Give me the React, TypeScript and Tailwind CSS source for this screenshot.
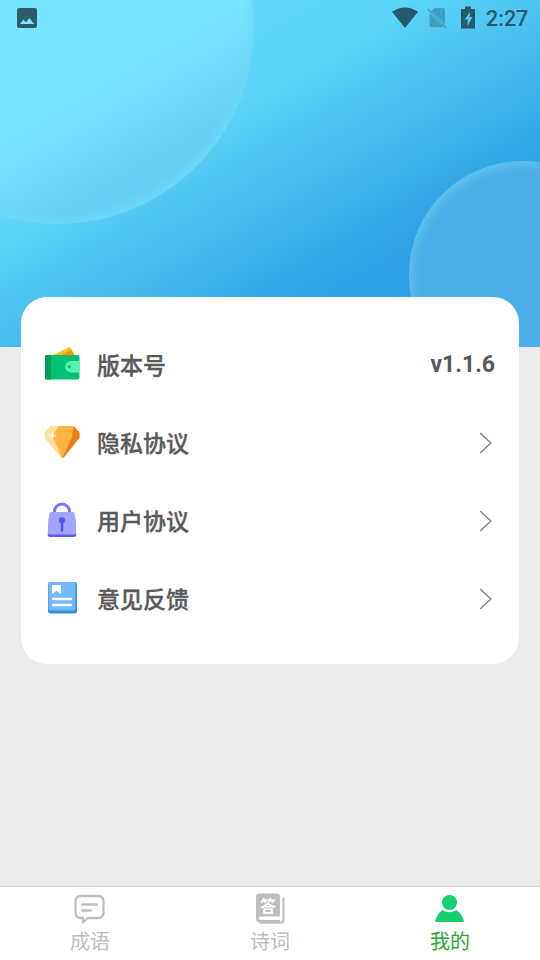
import React, { useState } from 'react';
import clsx from 'clsx';

const WalletIcon = () => (
  <svg width="36" height="36" viewBox="0 0 36 36">
    <path d="M7 10 25 1.200q1.200-.6 1.800.6L31 10z" fill="#ffc02c" />
    <path d="M15 10 27.200 3.400 31 10z" fill="#ff9500" />
    <rect x="1" y="9" width="34.500" height="24.500" rx="1.800" fill="#07c076" />
    <path d="M2.500 9H7v24.500H2.500A1.500 1.500 0 0 1 1 32V10.500A1.500 1.500 0 0 1 2.500 9z" fill="#03a055" />
    <path d="M27 15h8.500v11.500H27a5.750 5.750 0 0 1 0-11.500z" fill="#4ff5b1" />
    <circle cx="25.300" cy="20.700" r="1.500" fill="#07b26c" />
  </svg>
);

const DiamondIcon = () => (
  <svg width="36" height="36" viewBox="0 0 36 36">
    <path d="M8 2h20q1.500 0 2.500 1l4.300 4.500q.7.800.7 2v3q0 1-.7 2L20 33q-1.500 2-3.200 0L1.700 14.500q-.7-1-.7-2v-3q0-1.200.7-2L5.700 3Q6.600 2 8 2z" fill="#ffb341" />
    <path d="M8 2h6.500L8.500 12.500 18 34q-.7 0-1.300-.8L1.700 14.500q-.7-1-.7-2v-3q0-1.200.7-2L5.700 3Q6.600 2 8 2z" fill="#ffe09a" />
    <path d="m29.500 2.300 1 .7 4.300 4.500q.7.800.7 2v3q0 1-.7 2L20 33q-.8 1-1.700 1L28 13.500z" fill="#ea7a1c" />
    <path d="m8.500 7.800 1.100 2.900 2.900 1.100-2.900 1.100-1.100 2.900-1.100-2.900-2.900-1.100 2.900-1.100z" fill="#fff" />
  </svg>
);

const LockIcon = () => (
  <svg width="36" height="36" viewBox="0 0 36 36">
    <path d="M10.500 12v-2.500a7.500 7.500 0 0 1 15 0V12" fill="none" stroke="#7276fb" strokeWidth="3" />
    <path d="M5 14h26l1.200 18.500q0 2.500-2.500 2.500H6.300q-2.500 0-2.500-2.500z" fill="#5a5ef0" />
    <path d="M7 10h22q1.500 0 1.700 1.500l1.500 19q0 2-2.500 2H6.300q-2.500 0-2.500-2l1.500-19Q5.500 10 7 10z" fill="#a1a5ff" />
    <circle cx="18" cy="18.300" r="3" fill="#5155e6" />
    <path d="M18 19v9.500" stroke="#5155e6" strokeWidth="2.600" strokeLinecap="round" />
  </svg>
);

const BookIcon = () => (
  <svg width="36" height="36" viewBox="0 0 36 36">
    <rect x="4" y="2" width="29" height="31.500" rx="2.500" fill="#378bdc" />
    <rect x="4.500" y="2" width="27" height="28.500" rx="1.500" fill="#73b9fe" />
    <path d="M8 5h9v9l-4.500-3.300L8 14z" fill="#fff" />
    <path d="M9.200 19h17.600M9.200 25h17.600" stroke="#fff" strokeWidth="2.600" strokeLinecap="round" />
  </svg>
);

const Chevron = () => (
  <svg width="14" height="22" viewBox="0 0 14 22" fill="none" stroke="#868686" strokeWidth="1.500">
    <path d="M1.200 1 11.800 11 1.200 21" />
  </svg>
);

const StatusBar = () => (
  <div className="relative flex h-9 items-center pl-[17px] pr-[12px] text-[#26596a]">
    <svg width="20" height="20" viewBox="0 0 20 20">
      <path
        fillRule="evenodd"
        d="M2 0h16a2 2 0 0 1 2 2v16a2 2 0 0 1-2 2H2a2 2 0 0 1-2-2V2A2 2 0 0 1 2 0zM3 16h14l-4.500-6-3.500 4.400L6.500 11.500z"
        fill="#305c69"
      />
    </svg>
    <svg className="ml-auto" width="26" height="22" viewBox="0 0 26 22">
      <path d="M0 4.800Q13-4 26 4.800L13 21z" fill="currentColor" />
    </svg>
    <svg className="ml-[9px]" width="20" height="22" viewBox="0 0 20 22">
      <path d="M7.500 1H16a2 2 0 0 1 2 2v14.600L4.500 4zM2.500 6.200 17 20.300H4.500a2 2 0 0 1-2-2z" fill="#429ebd" />
      <path d="m1 2 18 18.800" stroke="#429ebd" strokeWidth="1.500" />
    </svg>
    <svg className="ml-[14px] -mt-[2px]" width="14" height="23" viewBox="0 0 14 23">
      <path
        fillRule="evenodd"
        d="M4 .5h6V3h3.200q.8 0 .8.800v18q0 .8-.8.800H.8q-.8 0-.8-.8v-18Q0 3 .8 3H4zM9 6 3.500 13.500H6.500V20l5-9H8.500z"
        fill="currentColor"
      />
    </svg>
    <span className="ml-[11px] mt-0.5 w-[42px] whitespace-nowrap font-[Roboto,sans-serif] text-[21.5px] font-medium leading-none">
      2:27
    </span>
  </div>
);

const Header = () => (
  <header className="relative h-[347px] overflow-hidden bg-[linear-gradient(150deg,#66dcfc_0px,#62d9fa_130px,#5bd5f8_205px,#48bdef_300px,#36aae8_380px,#2da1e4_418px,#2da1e4_600px)]">
    <div className="absolute -left-[140px] -top-[170px] size-[394px] rounded-full bg-[linear-gradient(150deg,#78e6ff_0px,#78e6ff_335px,#67cff6_445px,#69d2f8_540px)] shadow-[inset_-3px_-5px_9px_#6fd8fa]" />
    <div className="absolute left-[409px] top-[161px] size-[227px] rounded-full bg-[#4cafe7] shadow-[inset_3px_4px_9px_#60c2ed]" />
    <StatusBar />
  </header>
);

const menuItems = [
  { label: '版本号', icon: WalletIcon, value: 'v1.1.6' },
  { label: '隐私协议', icon: DiamondIcon },
  { label: '用户协议', icon: LockIcon },
  { label: '意见反馈', icon: BookIcon },
];

const ChatIcon = () => (
  <svg width="32" height="32" viewBox="0 0 32 32" fill="none" stroke="#bfbfbf" strokeWidth="2.300" strokeLinecap="round" strokeLinejoin="round">
    <path d="M7 3h17q5.500 0 5.500 5.500v11q0 5.500-5.500 5.500H14l-5 4.500V25H7q-5.500 0-5.500-5.500v-11Q1.500 3 7 3z" />
    <path d="M8 11.500h15M8 17.500h9" />
  </svg>
);

const AnswerIcon = () => (
  <span className="relative block size-8">
    <svg width="32" height="32" viewBox="0 0 32 32">
      <path d="M5 .5h18q3 0 3 3v20H6.500q-1.700 0-1.700 1.700 0 1.800 1.700 1.800H26v2.500H6q-4 0-4-4v-22q0-3 3-3z" fill="#bfbfbf" />
      <path d="M29.500 5v22q0 2.800-2.800 2.800H6.500" fill="none" stroke="#bfbfbf" strokeWidth="2" strokeLinecap="round" />
    </svg>
    <span className="absolute left-[6px] top-[4px] font-['Noto_Sans_CJK_SC',sans-serif] text-[16px] font-bold leading-[16px] text-white">
      答
    </span>
  </span>
);

const UserIcon = () => (
  <svg width="32" height="32" viewBox="0 0 32 32" fill="#15cf70">
    <circle cx="15.500" cy="9.500" r="7.600" />
    <path d="M8.500 17q7 4.500 14 0 5 3.500 7.300 10.500.4 1.500-1.300 1.500h-26q-1.700 0-1.300-1.500Q3.500 20.500 8.500 17z" />
  </svg>
);

const tabs = [
  { label: '成语', icon: ChatIcon },
  { label: '诗词', icon: AnswerIcon },
  { label: '我的', icon: UserIcon },
];

const App: React.FC = () => {
  const [activeTab, setActiveTab] = useState(2);

  return (
    <div className="flex h-[960px] w-[540px] flex-col overflow-hidden bg-[#ececec] font-['Noto_Sans_CJK_SC',sans-serif]">
      <Header />

      <main className="relative -mt-[50px] mx-[21px] h-[367.4px] rounded-[26px] bg-white pl-[23px] pr-6 pt-7">
        {menuItems.map(({ label, icon: Icon, value }) => (
          <div key={label} className="flex h-[78px] items-center">
            <Icon />
            <span className="ml-[17px] text-[23px] font-medium leading-none text-[#595959] [-webkit-text-stroke:0.35px_#595959]">
              {label}
            </span>
            <span className="ml-auto flex items-center">
              {value ? (
                <span className="font-[Roboto,sans-serif] text-[23px] font-bold leading-none text-[#595959]">{value}</span>
              ) : (
                <span className="mr-[2px] mt-[2px]">
                  <Chevron />
                </span>
              )}
            </span>
          </div>
        ))}
      </main>

      {/* Bottom navigation */}
      <nav className="mt-auto grid h-[74px] grid-cols-3 border-t border-[#d4d4d4] bg-white">
        {tabs.map(({ label, icon: Icon }, index) => (
          <button key={label} onClick={() => setActiveTab(index)} className="flex flex-col items-center pt-[6px]">
            <Icon />
            <span
              className={clsx(
                'mt-[6px] text-[20px] leading-none',
                activeTab === index ? 'text-[#2ba52e]' : 'text-[#bdbdbd]'
              )}
            >
              {label}
            </span>
          </button>
        ))}
      </nav>
    </div>
  );
};

export default App;
